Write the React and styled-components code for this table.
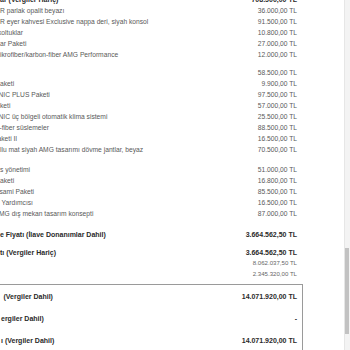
import React from "react";
import styled, { createGlobalStyle, css } from "styled-components";

const GlobalStyle = createGlobalStyle`
  html, body { margin: 0; padding: 0; background: #fff; }
  #root { width: 350px; height: 350px; overflow: hidden; }
`;

const Page = styled.div`
  display: flex;
  width: 350px;
  height: 350px;
  overflow: hidden;
  background: #fff;
  font-family: "Liberation Sans", Arial, sans-serif;
`;

const Viewport = styled.div`
  flex: 1;
  overflow: hidden;
`;

const Sheet = styled.div`
  width: 303px;
  margin-top: -7px;
  display: flex;
  flex-direction: column;
`;

const Group = styled.div`
  display: flex;
  flex-direction: column;
  margin-top: ${(p) => p.$gap || 0}px;
`;

const variants = {
  regular: css`
    font-size: 6.7px;
    color: #595959;
    font-weight: 400;
  `,
  small: css`
    font-size: 6.1px;
    color: #666;
    font-weight: 400;
  `,
  bold: css`
    font-size: 7px;
    color: #2a2a2a;
    font-weight: 700;
  `,
};

const Row = styled.div`
  display: flex;
  align-items: center;
  justify-content: space-between;
  height: ${(p) => p.$h || 11}px;
  margin-top: ${(p) => p.$gap || 0}px;
  padding-right: ${(p) => (p.$inBox ? 0 : 6)}px;
  white-space: nowrap;
  line-height: 1;
  ${(p) => variants[p.$v || "regular"]}
`;

const Label = styled.span`
  margin-left: ${(p) => p.$shift || 0}px;
`;

const Value = styled.span`
  flex-shrink: 0;
  margin-left: auto;
`;

const TotalsBox = styled.div`
  margin-top: 4px;
  margin-left: -10px;
  padding-left: 10px;
  padding-right: 5px;
  border: 1px solid #9a9a9a;
  display: flex;
  flex-direction: column;
`;

const Scrollbar = styled.div`
  width: 5px;
  flex-shrink: 0;
  background: #f3f3f3;
  border-left: 1px solid #e6e6e6;
  display: flex;
  flex-direction: column;
`;

const Thumb = styled.div`
  margin-top: 248px;
  height: 86px;
  width: 4px;
  background: #c2c2c2;
`;

const group1 = [
  ["R parlak opalit beyazı", "36.000,00 TL", 0],
  ["R eyer kahvesi Exclusive nappa deri, siyah konsol", "91.500,00 TL", 0],
  ["koltuklar", "10.800,00 TL", -2],
  ["ar Paketi", "27.000,00 TL", 0],
  ["ikrofiber/karbon-fiber AMG Performance", "12.000,00 TL", 0],
];

const group2 = [
  ["", "58.500,00 TL", 0],
  ["aketi", "9.900,00 TL", 0],
  ["NIC PLUS Paketi", "97.500,00 TL", -1.5],
  ["keti", "57.000,00 TL", 0],
  ["NIC üç bölgeli otomatik klima sistemi", "25.500,00 TL", -1.5],
  ["-fiber süslemeler", "88.500,00 TL", -0.5],
  ["aketi II", "16.500,00 TL", -2.5],
  ["llu mat siyah AMG tasarımı dövme jantlar, beyaz", "70.500,00 TL", 0],
];

const group3 = [
  ["s yönetimi", "51.000,00 TL", 0],
  ["aketi", "16.800,00 TL", 0],
  ["sami Paketi", "85.500,00 TL", -0.5],
  ["Yardımcısı", "16.500,00 TL", 1.5],
  ["MG dış mekan tasarım konsepti", "87.000,00 TL", -1],
];

const boxRows = [
  ["(Vergiler Dahil)", "14.071.920,00 TL", 2.5],
  ["ergiler Dahil)", "-", 0],
  ["ı (Vergiler Dahil)", "14.071.920,00 TL", 0],
];

function Lines({ rows }) {
  return rows.map(([label, value, shift], i) => (
    <Row key={i}>
      <Label $shift={shift}>{label}</Label>
      <Value>{value}</Value>
    </Row>
  ));
}

export default function App() {
  return (
    <>
      <GlobalStyle />
      <Page>
        <Viewport>
          <Sheet>
            <Row $v="bold" $h={13}>
              <Label>ar (Vergiler Hariç)</Label>
              <Value>708.500,00 TL</Value>
            </Row>
            <Group>
              <Lines rows={group1} />
            </Group>
            <Group $gap={7}>
              <Lines rows={group2} />
            </Group>
            <Group $gap={9}>
              <Lines rows={group3} />
            </Group>
            <Group $gap={9}>
              <Row $v="bold">
                <Label>e Fiyatı (İlave Donanımlar Dahil)</Label>
                <Value>3.664.562,50 TL</Value>
              </Row>
              <Row $v="bold" $gap={7}>
                <Label>tı (Vergiler Hariç)</Label>
                <Value>3.664.562,50 TL</Value>
              </Row>
              <Row $v="small">
                <Value>8.062.037,50 TL</Value>
              </Row>
              <Row $v="small">
                <Value>2.345.320,00 TL</Value>
              </Row>
            </Group>
            <TotalsBox>
              {boxRows.map(([label, value, shift], i) => (
                <Row key={i} $v="bold" $h={22} $inBox>
                  <Label $shift={shift}>{label}</Label>
                  <Value>{value}</Value>
                </Row>
              ))}
            </TotalsBox>
          </Sheet>
        </Viewport>
        <Scrollbar>
          <Thumb />
        </Scrollbar>
      </Page>
    </>
  );
}
